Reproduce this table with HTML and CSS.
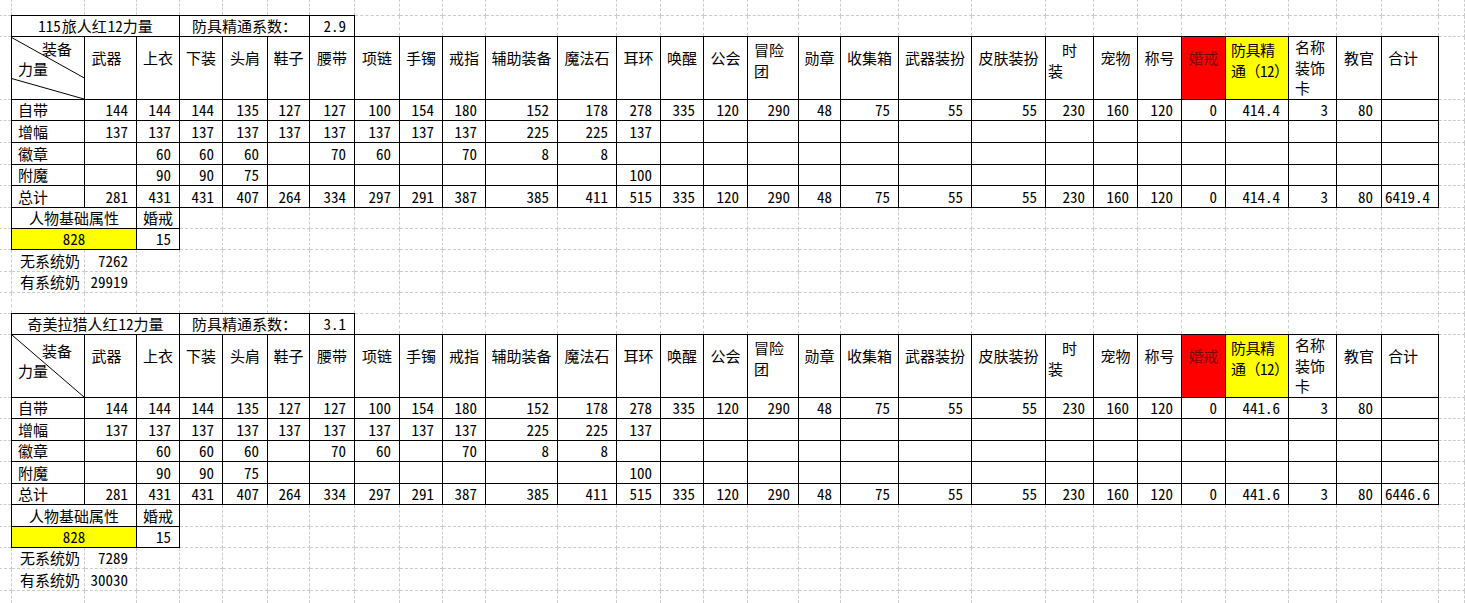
FILE: index.html
```html
<!DOCTYPE html>
<html lang="zh-CN">
<head>
<meta charset="utf-8">
<title>力量计算</title>
<link rel="stylesheet" href="styles.css">
</head>
<body>
<table class="sheet">
<colgroup>
<col style="width:12px"><col style="width:73px"><col style="width:52px"><col style="width:43px"><col style="width:43px"><col style="width:45px"><col style="width:42px"><col style="width:45px"><col style="width:45px"><col style="width:43px"><col style="width:43px"><col style="width:72px"><col style="width:59px"><col style="width:44px"><col style="width:43px"><col style="width:44px"><col style="width:51px"><col style="width:42px"><col style="width:58px"><col style="width:73px"><col style="width:74px"><col style="width:48px"><col style="width:44px"><col style="width:44px"><col style="width:44px"><col style="width:63px"><col style="width:48px"><col style="width:45px"><col style="width:57px"><col style="width:26px">
</colgroup>
<tbody>
<tr class="r15"><td></td><td></td><td></td><td></td><td></td><td></td><td></td><td></td><td></td><td></td><td></td><td></td><td></td><td></td><td></td><td></td><td></td><td></td><td></td><td></td><td></td><td></td><td></td><td></td><td></td><td></td><td></td><td></td><td></td><td></td></tr>

<!-- table 1 -->
<tr class="r21"><td></td><td class="b ctr" colspan="3">115&#8202;旅人红&#8202;12力量</td><td class="b ctr" colspan="3">防具精通系数<span class="fw">：</span></td><td class="b num">2.9</td><td></td><td></td><td></td><td></td><td></td><td></td><td></td><td></td><td></td><td></td><td></td><td></td><td></td><td></td><td></td><td></td><td></td><td></td><td></td><td></td><td></td><td></td></tr>
<tr class="r63"><td></td>
<td class="b diag"><svg class="diag-lines" viewBox="0 0 73 63" preserveAspectRatio="none"><line x1="0" y1="0.7" x2="73" y2="41.5" /><line x1="0" y1="42.3" x2="73" y2="63" /></svg><div class="diag-top">装备</div><div class="diag-bot">力量</div></td>
<td class="b h wq">武器</td><td class="b h">上衣</td><td class="b h">下装</td><td class="b h">头肩</td><td class="b h">鞋子</td><td class="b h">腰带</td><td class="b h">项链</td><td class="b h">手镯</td><td class="b h">戒指</td><td class="b h">辅助装备</td><td class="b h">魔法石</td><td class="b h">耳环</td><td class="b h">唤醒</td><td class="b h">公会</td><td class="b h h2 hl">冒险<br>团</td><td class="b h">勋章</td><td class="b h">收集箱</td><td class="b h">武器装扮</td><td class="b h">皮肤装扮</td><td class="b h h2 hl hl-tight"><span class="indent">时</span><br>装</td><td class="b h">宠物</td><td class="b h">称号</td><td class="b h red">婚戒</td><td class="b h h2 hl yel mastery">防具精<br>通<span class="fw">（</span>12<span class="fw">）</span></td><td class="b h h3 hl">名称<br>装饰<br>卡</td><td class="b h">教官</td><td class="b h hl">合计</td><td></td></tr>
<tr class="r21"><td></td><td class="b lab">自带</td><td class="b num">144</td><td class="b num">144</td><td class="b num">144</td><td class="b num">135</td><td class="b num">127</td><td class="b num">127</td><td class="b num">100</td><td class="b num">154</td><td class="b num">180</td><td class="b num">152</td><td class="b num">178</td><td class="b num">278</td><td class="b num">335</td><td class="b num">120</td><td class="b num">290</td><td class="b num">48</td><td class="b num">75</td><td class="b num">55</td><td class="b num">55</td><td class="b num">230</td><td class="b num">160</td><td class="b num">120</td><td class="b num">0</td><td class="b num">414.4</td><td class="b num">3</td><td class="b num">80</td><td class="b num"></td><td></td></tr>
<tr class="r22"><td></td><td class="b lab">增幅</td><td class="b num">137</td><td class="b num">137</td><td class="b num">137</td><td class="b num">137</td><td class="b num">137</td><td class="b num">137</td><td class="b num">137</td><td class="b num">137</td><td class="b num">137</td><td class="b num">225</td><td class="b num">225</td><td class="b num">137</td><td class="b num"></td><td class="b num"></td><td class="b num"></td><td class="b num"></td><td class="b num"></td><td class="b num"></td><td class="b num"></td><td class="b num"></td><td class="b num"></td><td class="b num"></td><td class="b num"></td><td class="b num"></td><td class="b num"></td><td class="b num"></td><td class="b num"></td><td></td></tr>
<tr class="r22"><td></td><td class="b lab">徽章</td><td class="b num"></td><td class="b num">60</td><td class="b num">60</td><td class="b num">60</td><td class="b num"></td><td class="b num">70</td><td class="b num">60</td><td class="b num"></td><td class="b num">70</td><td class="b num">8</td><td class="b num">8</td><td class="b num"></td><td class="b num"></td><td class="b num"></td><td class="b num"></td><td class="b num"></td><td class="b num"></td><td class="b num"></td><td class="b num"></td><td class="b num"></td><td class="b num"></td><td class="b num"></td><td class="b num"></td><td class="b num"></td><td class="b num"></td><td class="b num"></td><td class="b num"></td><td></td></tr>
<tr class="r21"><td></td><td class="b lab">附魔</td><td class="b num"></td><td class="b num">90</td><td class="b num">90</td><td class="b num">75</td><td class="b num"></td><td class="b num"></td><td class="b num"></td><td class="b num"></td><td class="b num"></td><td class="b num"></td><td class="b num"></td><td class="b num">100</td><td class="b num"></td><td class="b num"></td><td class="b num"></td><td class="b num"></td><td class="b num"></td><td class="b num"></td><td class="b num"></td><td class="b num"></td><td class="b num"></td><td class="b num"></td><td class="b num"></td><td class="b num"></td><td class="b num"></td><td class="b num"></td><td class="b num"></td><td></td></tr>
<tr class="r22"><td></td><td class="b lab">总计</td><td class="b num">281</td><td class="b num">431</td><td class="b num">431</td><td class="b num">407</td><td class="b num">264</td><td class="b num">334</td><td class="b num">297</td><td class="b num">291</td><td class="b num">387</td><td class="b num">385</td><td class="b num">411</td><td class="b num">515</td><td class="b num">335</td><td class="b num">120</td><td class="b num">290</td><td class="b num">48</td><td class="b num">75</td><td class="b num">55</td><td class="b num">55</td><td class="b num">230</td><td class="b num">160</td><td class="b num">120</td><td class="b num">0</td><td class="b num">414.4</td><td class="b num">3</td><td class="b num">80</td><td class="b num">6419.4</td><td></td></tr>
<tr class="r21"><td></td><td class="b ctr" colspan="2">人物基础属性</td><td class="b ctr">婚戒</td><td></td><td></td><td></td><td></td><td></td><td></td><td></td><td></td><td></td><td></td><td></td><td></td><td></td><td></td><td></td><td></td><td></td><td></td><td></td><td></td><td></td><td></td><td></td><td></td><td></td><td></td></tr>
<tr class="r21"><td></td><td class="b ctr yel" colspan="2">828</td><td class="b num">15</td><td></td><td></td><td></td><td></td><td></td><td></td><td></td><td></td><td></td><td></td><td></td><td></td><td></td><td></td><td></td><td></td><td></td><td></td><td></td><td></td><td></td><td></td><td></td><td></td><td></td><td></td></tr>
<tr class="r22"><td></td><td class="lab lab-wide">无系统奶</td><td class="num">7262</td><td></td><td></td><td></td><td></td><td></td><td></td><td></td><td></td><td></td><td></td><td></td><td></td><td></td><td></td><td></td><td></td><td></td><td></td><td></td><td></td><td></td><td></td><td></td><td></td><td></td><td></td><td></td></tr>
<tr class="r21"><td></td><td class="lab lab-wide">有系统奶</td><td class="num">29919</td><td></td><td></td><td></td><td></td><td></td><td></td><td></td><td></td><td></td><td></td><td></td><td></td><td></td><td></td><td></td><td></td><td></td><td></td><td></td><td></td><td></td><td></td><td></td><td></td><td></td><td></td><td></td></tr>
<tr class="r21"><td></td><td></td><td></td><td></td><td></td><td></td><td></td><td></td><td></td><td></td><td></td><td></td><td></td><td></td><td></td><td></td><td></td><td></td><td></td><td></td><td></td><td></td><td></td><td></td><td></td><td></td><td></td><td></td><td></td><td></td></tr>

<!-- table 2 -->
<tr class="r21"><td></td><td class="b ctr" colspan="3">奇美拉猎人红&#8202;12力量</td><td class="b ctr" colspan="3">防具精通系数<span class="fw">：</span></td><td class="b num">3.1</td><td></td><td></td><td></td><td></td><td></td><td></td><td></td><td></td><td></td><td></td><td></td><td></td><td></td><td></td><td></td><td></td><td></td><td></td><td></td><td></td><td></td><td></td></tr>
<tr class="r63"><td></td>
<td class="b diag diag-b"><svg class="diag-lines" viewBox="0 0 73 63" preserveAspectRatio="none"><line x1="0" y1="0" x2="73" y2="63" /></svg><div class="diag-top">装备</div><div class="diag-bot">力量</div></td>
<td class="b h wq">武器</td><td class="b h">上衣</td><td class="b h">下装</td><td class="b h">头肩</td><td class="b h">鞋子</td><td class="b h">腰带</td><td class="b h">项链</td><td class="b h">手镯</td><td class="b h">戒指</td><td class="b h">辅助装备</td><td class="b h">魔法石</td><td class="b h">耳环</td><td class="b h">唤醒</td><td class="b h">公会</td><td class="b h h2 hl">冒险<br>团</td><td class="b h">勋章</td><td class="b h">收集箱</td><td class="b h">武器装扮</td><td class="b h">皮肤装扮</td><td class="b h h2 hl hl-tight"><span class="indent">时</span><br>装</td><td class="b h">宠物</td><td class="b h">称号</td><td class="b h red">婚戒</td><td class="b h h2 hl yel mastery">防具精<br>通<span class="fw">（</span>12<span class="fw">）</span></td><td class="b h h3 hl">名称<br>装饰<br>卡</td><td class="b h">教官</td><td class="b h hl">合计</td><td></td></tr>
<tr class="r21"><td></td><td class="b lab">自带</td><td class="b num">144</td><td class="b num">144</td><td class="b num">144</td><td class="b num">135</td><td class="b num">127</td><td class="b num">127</td><td class="b num">100</td><td class="b num">154</td><td class="b num">180</td><td class="b num">152</td><td class="b num">178</td><td class="b num">278</td><td class="b num">335</td><td class="b num">120</td><td class="b num">290</td><td class="b num">48</td><td class="b num">75</td><td class="b num">55</td><td class="b num">55</td><td class="b num">230</td><td class="b num">160</td><td class="b num">120</td><td class="b num">0</td><td class="b num">441.6</td><td class="b num">3</td><td class="b num">80</td><td class="b num"></td><td></td></tr>
<tr class="r22"><td></td><td class="b lab">增幅</td><td class="b num">137</td><td class="b num">137</td><td class="b num">137</td><td class="b num">137</td><td class="b num">137</td><td class="b num">137</td><td class="b num">137</td><td class="b num">137</td><td class="b num">137</td><td class="b num">225</td><td class="b num">225</td><td class="b num">137</td><td class="b num"></td><td class="b num"></td><td class="b num"></td><td class="b num"></td><td class="b num"></td><td class="b num"></td><td class="b num"></td><td class="b num"></td><td class="b num"></td><td class="b num"></td><td class="b num"></td><td class="b num"></td><td class="b num"></td><td class="b num"></td><td class="b num"></td><td></td></tr>
<tr class="r21"><td></td><td class="b lab">徽章</td><td class="b num"></td><td class="b num">60</td><td class="b num">60</td><td class="b num">60</td><td class="b num"></td><td class="b num">70</td><td class="b num">60</td><td class="b num"></td><td class="b num">70</td><td class="b num">8</td><td class="b num">8</td><td class="b num"></td><td class="b num"></td><td class="b num"></td><td class="b num"></td><td class="b num"></td><td class="b num"></td><td class="b num"></td><td class="b num"></td><td class="b num"></td><td class="b num"></td><td class="b num"></td><td class="b num"></td><td class="b num"></td><td class="b num"></td><td class="b num"></td><td class="b num"></td><td></td></tr>
<tr class="r22"><td></td><td class="b lab">附魔</td><td class="b num"></td><td class="b num">90</td><td class="b num">90</td><td class="b num">75</td><td class="b num"></td><td class="b num"></td><td class="b num"></td><td class="b num"></td><td class="b num"></td><td class="b num"></td><td class="b num"></td><td class="b num">100</td><td class="b num"></td><td class="b num"></td><td class="b num"></td><td class="b num"></td><td class="b num"></td><td class="b num"></td><td class="b num"></td><td class="b num"></td><td class="b num"></td><td class="b num"></td><td class="b num"></td><td class="b num"></td><td class="b num"></td><td class="b num"></td><td class="b num"></td><td></td></tr>
<tr class="r21"><td></td><td class="b lab">总计</td><td class="b num">281</td><td class="b num">431</td><td class="b num">431</td><td class="b num">407</td><td class="b num">264</td><td class="b num">334</td><td class="b num">297</td><td class="b num">291</td><td class="b num">387</td><td class="b num">385</td><td class="b num">411</td><td class="b num">515</td><td class="b num">335</td><td class="b num">120</td><td class="b num">290</td><td class="b num">48</td><td class="b num">75</td><td class="b num">55</td><td class="b num">55</td><td class="b num">230</td><td class="b num">160</td><td class="b num">120</td><td class="b num">0</td><td class="b num">441.6</td><td class="b num">3</td><td class="b num">80</td><td class="b num">6446.6</td><td></td></tr>
<tr class="r22"><td></td><td class="b ctr" colspan="2">人物基础属性</td><td class="b ctr">婚戒</td><td></td><td></td><td></td><td></td><td></td><td></td><td></td><td></td><td></td><td></td><td></td><td></td><td></td><td></td><td></td><td></td><td></td><td></td><td></td><td></td><td></td><td></td><td></td><td></td><td></td><td></td></tr>
<tr class="r21"><td></td><td class="b ctr yel" colspan="2">828</td><td class="b num">15</td><td></td><td></td><td></td><td></td><td></td><td></td><td></td><td></td><td></td><td></td><td></td><td></td><td></td><td></td><td></td><td></td><td></td><td></td><td></td><td></td><td></td><td></td><td></td><td></td><td></td><td></td></tr>
<tr class="r21"><td></td><td class="lab lab-wide">无系统奶</td><td class="num">7289</td><td></td><td></td><td></td><td></td><td></td><td></td><td></td><td></td><td></td><td></td><td></td><td></td><td></td><td></td><td></td><td></td><td></td><td></td><td></td><td></td><td></td><td></td><td></td><td></td><td></td><td></td><td></td></tr>
<tr class="r22"><td></td><td class="lab lab-wide">有系统奶</td><td class="num">30030</td><td></td><td></td><td></td><td></td><td></td><td></td><td></td><td></td><td></td><td></td><td></td><td></td><td></td><td></td><td></td><td></td><td></td><td></td><td></td><td></td><td></td><td></td><td></td><td></td><td></td><td></td><td></td></tr>
<tr class="r21"><td></td><td></td><td></td><td></td><td></td><td></td><td></td><td></td><td></td><td></td><td></td><td></td><td></td><td></td><td></td><td></td><td></td><td></td><td></td><td></td><td></td><td></td><td></td><td></td><td></td><td></td><td></td><td></td><td></td><td></td></tr>
</tbody>
</table>
</body>
</html>
```

FILE: styles.css
```css
html, body {
  margin: 0;
  padding: 0;
  background: #ffffff;
  overflow: hidden;
}

.sheet {
  border-collapse: collapse;
  table-layout: fixed;
  width: 1465px;
  margin: -1px 0 0 -1px;
  font-family: "Noto Sans CJK SC", "Noto Sans", sans-serif;
  font-size: 15px;
  line-height: 20px;
  color: #000;
  font-feature-settings: "hwid" 1;
}

.sheet td {
  border: 1px dashed #cccccc;
  padding: 0;
  white-space: nowrap;
  overflow: hidden;
  vertical-align: middle;
}

.sheet td.b {
  border: 1px solid #000;
}

.fw { font-feature-settings: normal; }

.r15 { height: 16px; }
.r21 { height: 21px; }
.r22 { height: 22px; }
.r63 { height: 63px; }

.ctr { text-align: center; }

.num {
  text-align: right;
  padding-right: 8px !important;
}

.lab {
  text-align: left;
  padding-left: 6px !important;
}

.lab-wide {
  padding-left: 8px !important;
}

/* header cells */
.h {
  vertical-align: top !important;
  text-align: center;
  padding-top: 10px !important;
  line-height: 21px;
}

.h2 { padding-top: 2px !important; }

.h3 {
  padding-top: 0 !important;
  line-height: 20.5px;
}

.hl {
  text-align: left;
  padding-left: 6px !important;
}

.hl-tight { padding-left: 2px !important; }

.sheet td.mastery {
  padding-left: 5px !important;
  overflow: visible;
  letter-spacing: -0.5px;
}

.indent {
  display: inline-block;
  padding-left: 14px;
}

.wq { padding-right: 8px !important; }

.red {
  background: #ff0000;
  color: #7a0000;
}

.yel { background: #ffff00; }

/* diagonal header cell */
.diag {
  position: relative;
  vertical-align: top !important;
  padding-top: 2px !important;
}

.diag-b { padding-top: 6px !important; }

.diag-lines {
  position: absolute;
  left: 0;
  top: 0;
  width: 100%;
  height: 100%;
  overflow: visible;
}

.diag-lines line {
  stroke: #000;
  stroke-width: 1;
  vector-effect: non-scaling-stroke;
}

.diag-top {
  text-align: right;
  padding-right: 12px;
  line-height: 20px;
}

.diag-bot {
  text-align: left;
  padding-left: 6px;
  line-height: 20px;
}
```
